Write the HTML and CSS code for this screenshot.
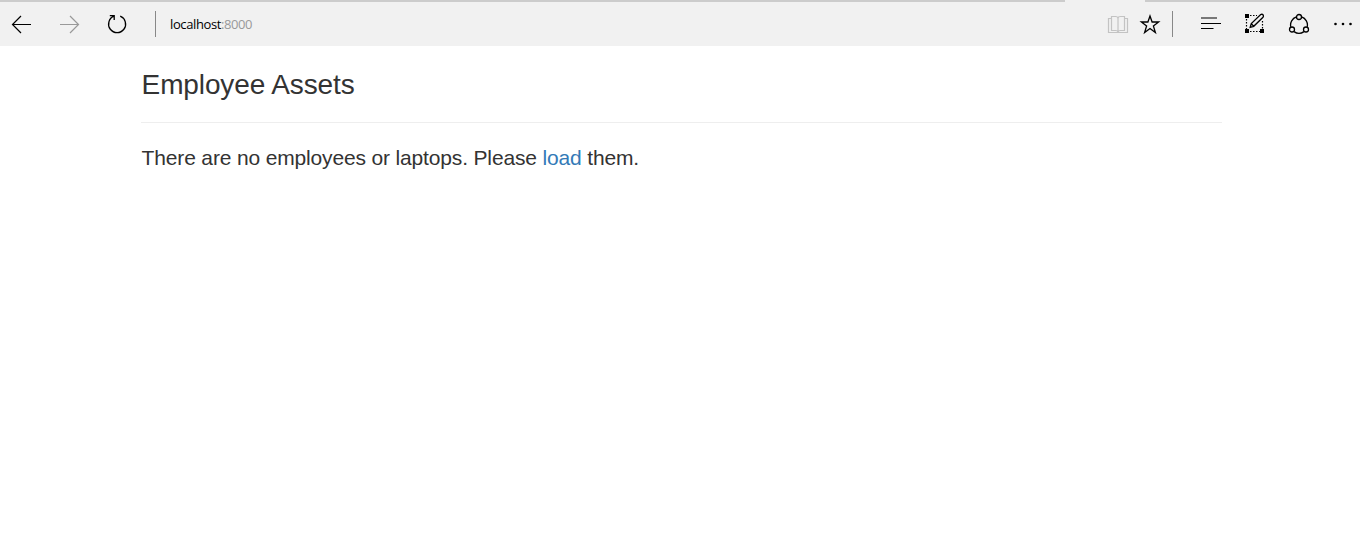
FILE: index.html
```html
<!DOCTYPE html>
<html lang="en">
<head>
<meta charset="utf-8">
<title>Employee Assets</title>
<link rel="stylesheet" href="styles.css">
</head>
<body>
<div class="tab-edge"><span class="edge edge-left"></span><span class="edge edge-right"></span></div>
<header class="toolbar">
  <nav class="nav">
    <svg class="icon" viewBox="0 0 24 24"><path d="M2.5 12.5H21M11 4L2.5 12.5L11 21"/></svg>
    <svg class="icon muted" viewBox="0 0 24 24"><path d="M2 12.5H20.5M12 4L20.5 12.5L12 21"/></svg>
    <svg class="icon refresh" viewBox="0 0 24 24"><path class="bold" d="M15.2 4.2A8.5 8.5 0 1 1 9 4.2M4.8 3.7H9.2V8"/></svg>
  </nav>
  <span class="divider"></span>
  <div class="address">localhost<span class="port">:8000</span></div>
  <div class="page-actions">
    <svg class="icon faint" viewBox="0 0 24 24"><path d="M5.5 4.5H9.5Q12 4.5 12 6.5Q12 4.5 14.5 4.5H18.5V18.5H14.5Q12 18.5 12 20.5Q12 18.5 9.5 18.5H5.5ZM12 6V20M5.5 6.5H2.5V20.5H21.5V6.5H18.5"/></svg>
    <svg class="icon star" viewBox="0 0 24 24"><path class="bold" d="M12 4L14.1 10H20.6L15.4 13.9L17.4 20.6L12 16.6L6.6 20.6L8.6 13.9L3.4 10H9.9Z"/></svg>
  </div>
  <span class="divider divider-end"></span>
  <div class="menu">
    <svg class="icon" viewBox="0 0 24 24"><path d="M2 6H18M2 11.5H22M2 16.5H14.5"/></svg>
    <svg class="icon" viewBox="0 0 24 24"><path class="dots" d="M7 3.5H14M7 19.5H17M3.5 7V17M19.5 9V17"/><path class="solid" d="M2 2H6V6H2ZM2 17H6V21H2ZM17 17H21V21H17Z"/><path class="bold" d="M7.2 15.3L8.3 11.6L17.7 2.5Q19.2 1.7 20.3 3.1Q20.7 4.4 20 5.2L10.7 14.3ZM8.3 11.6L10.7 14.3"/></svg>
    <svg class="icon" viewBox="0 0 24 24"><path class="bold" d="M9.4 4.9A8.5 8.5 0 0 0 3.8 14.9M14.6 4.9A8.5 8.5 0 0 1 20.2 14.9M7 19.6A8.5 8.5 0 0 0 17 19.6"/><circle class="bold" cx="12" cy="5" r="2.5"/><circle class="bold" cx="5" cy="17.5" r="2.5"/><circle class="bold" cx="19" cy="17.5" r="2.5"/></svg>
    <svg class="icon" viewBox="0 0 24 24"><g class="solid"><circle cx="4.5" cy="12" r="1.3"/><circle cx="12" cy="12" r="1.3"/><circle cx="19.5" cy="12" r="1.3"/></g></svg>
  </div>
</header>
<main class="container">
  <h1 class="title">Employee Assets</h1>
  <p class="message">There are no employees or laptops. Please <a class="link" href="#">load</a> them.</p>
</main>
</body>
</html>
```
FILE: styles.css
```css
body {
  margin: 0;
  background: #fff;
  color: #333;
  font-family: "Liberation Sans", Arial, sans-serif;
}
.tab-edge {
  display: flex;
  justify-content: space-between;
  height: 2px;
  background: #f1f1f1;
}
.edge { background: #ccc; }
.edge-left { width: 1065px; }
.edge-right { width: 215px; }
.toolbar {
  display: flex;
  align-items: center;
  box-sizing: border-box;
  height: 44px;
  padding: 0 5px 0 10px;
  background: #f1f1f1;
}
.nav { display: flex; gap: 24px; }
.refresh { margin-left: -1px; }
.icon {
  display: block;
  flex: none;
  width: 24px;
  height: 24px;
  fill: none;
  stroke: #000;
  stroke-width: 1.2;
}
.bold { stroke-width: 1.3; }
.dots { stroke-dasharray: 1.5 1.5; }
.solid { fill: #000; stroke: none; }
.muted { stroke: #999; }
.faint { stroke: #c3c3c3; }
.divider {
  width: 1px;
  height: 26px;
  margin-left: 26px;
  background: #888;
}
.address {
  flex: 1;
  margin-left: 14px;
  color: #000;
  font: 13px/20px "Open Sans", "Noto Sans", sans-serif;
  letter-spacing: -0.39px;
}
.port { color: #999; }
.page-actions { display: flex; gap: 8px; }
.divider-end { margin-left: 10px; }
.menu {
  display: flex;
  gap: 20px;
  margin-left: 26px;
}
.container {
  width: 1081px;
  margin-left: 141px;
}
.title {
  margin: 0 0 20px;
  padding: 22px 0 21px;
  border-bottom: 1px solid #eee;
  font-size: 28px;
  font-weight: 400;
  line-height: 33px;
  letter-spacing: -0.12px;
  text-indent: 0.6px;
}
.message {
  margin: 0;
  font-size: 21px;
  line-height: 30px;
  letter-spacing: -0.155px;
  text-indent: 0.6px;
}
.link { color: #337ab7; text-decoration: none; }
```
